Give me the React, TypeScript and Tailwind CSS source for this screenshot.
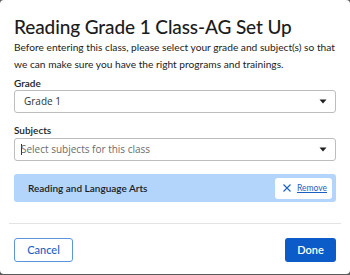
import React from "react";

function Caret() {
  return (
    <svg width="8" height="5" viewBox="0 0 8 5" className="shrink-0">
      <path d="M0.5 0.5 L7.5 0.5 L4 4.5 Z" fill="#1f1f1f" />
    </svg>
  );
}

export default function App() {
  const geo = { fontFamily: "Lato, 'Noto Sans', sans-serif" };
  return (
    <div className="w-[350px] h-[275px] bg-[#5a5a5a] overflow-hidden">
      <div
        className="w-[350px] h-[274px] bg-white rounded-[4px] flex flex-col"
        style={geo}
      >
        <div className="px-[14px] pt-[15px] flex flex-col">
          <h1 className="text-[19px] leading-[24px] font-medium text-[#1c1c1c] tracking-[-0.1px]">
            Reading Grade 1 Class-AG Set Up
          </h1>
          <p className="mr-[-8px] text-[10.2px] leading-[17px] text-[#222]">
            Before entering this class, please select your grade and subject(s) so that we can make sure you have the right programs and trainings.
          </p>
          <label className="mt-[4px] text-[10px] leading-[13px] font-semibold text-[#1c1c1c]">Grade</label>
          <div
            className="h-[23px] border border-[#bdbdbd] rounded-[3px] flex items-center justify-between pl-[9px] pr-[8px]"
            style={{ fontFamily: "'Open Sans', 'Noto Sans', sans-serif" }}
          >
            <span className="text-[10px] text-[#333]">Grade 1</span>
            <Caret />
          </div>
          <label className="mt-[11px] text-[10px] leading-[13px] font-semibold text-[#1c1c1c]">Subjects</label>
          <div
            className="mt-[1px] h-[23px] border border-[#bdbdbd] rounded-[3px] flex items-center justify-between pl-[6px] pr-[8px]"
            style={{ fontFamily: "'Open Sans', 'Noto Sans', sans-serif" }}
          >
            <span className="text-[10px] text-[#6b6b6b] flex items-center">
              <span className="inline-block w-px h-[11px] bg-[#333] mr-[-1px]" />
              Select subjects for this class
            </span>
            <Caret />
          </div>
          <div className="mt-[13px] h-[28px] bg-[#b3d5fc] rounded-[3px] flex items-center justify-between pl-[14px] pr-[4px]">
            <span className="text-[10px] font-semibold text-[#1c1c1c]">Reading and Language Arts</span>
            <div className="h-[21px] bg-white rounded-[3px] flex items-center gap-[6px] pl-[8px] pr-[5px]">
              <svg width="8" height="8" viewBox="0 0 8 8">
                <path d="M0.5 0.5 L7.5 7.5 M7.5 0.5 L0.5 7.5" stroke="#1a5fc4" strokeWidth="1.1" />
              </svg>
              <span className="text-[8.5px] text-[#1a5fc4] underline">Remove</span>
            </div>
          </div>
        </div>
        <div className="mx-[9px] mt-[21px] h-px bg-[#e3e3e3]" />
        <div className="px-[14px] mt-[14px] flex justify-between">
          <button className="w-[59px] h-[24px] border border-[#5b95e0] rounded-[3px] text-[11px] font-medium text-[#1a5fc4]">
            Cancel
          </button>
          <button className="w-[51px] h-[24px] bg-[#0b5cc8] rounded-[3px] text-[11px] font-semibold text-white">
            Done
          </button>
        </div>
      </div>
    </div>
  );
}
